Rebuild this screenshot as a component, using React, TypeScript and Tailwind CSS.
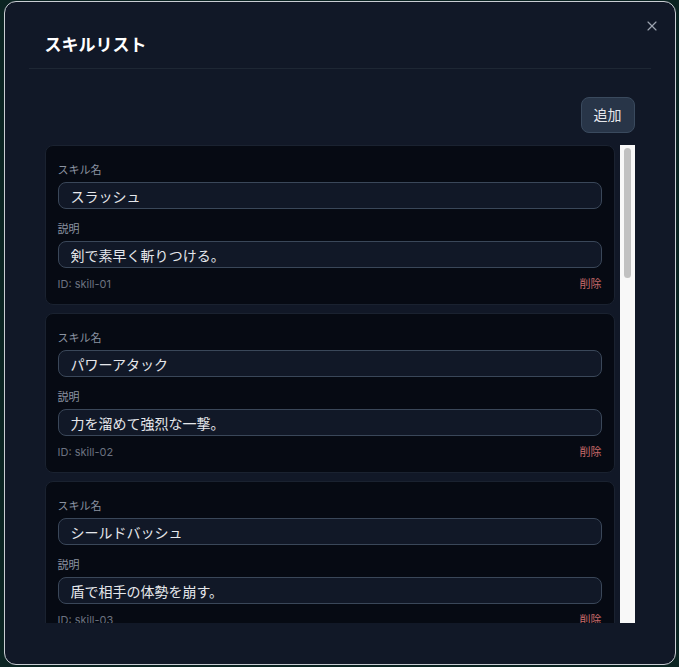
import React from "react";
import { X } from "lucide-react";

type Skill = {
  id: string;
  name: string;
  description: string;
};

const skills: Skill[] = [
  { id: "skill-01", name: "スラッシュ", description: "剣で素早く斬りつける。" },
  { id: "skill-02", name: "パワーアタック", description: "力を溜めて強烈な一撃。" },
  { id: "skill-03", name: "シールドバッシュ", description: "盾で相手の体勢を崩す。" },
  { id: "skill-04", name: "ファイアボール", description: "炎の球を放って敵を焼く。" },
  { id: "skill-05", name: "ヒール", description: "味方の傷を癒やす。" },
  { id: "skill-06", name: "アイスランス", description: "氷の槍で敵を貫く。" },
  { id: "skill-07", name: "ウォークライ", description: "雄叫びで仲間を鼓舞する。" },
  { id: "skill-08", name: "スティール", description: "敵からアイテムを盗む。" },
  { id: "skill-09", name: "サンダーボルト", description: "雷を落として敵を痺れさせる。" },
  { id: "skill-10", name: "カウンター", description: "攻撃を受け流して反撃する。" },
];

function SkillCard({ skill }: { skill: Skill }) {
  return (
    <div className="shrink-0 rounded-lg border border-[#1a2230] bg-[#060a13] px-3 pt-4 pb-3">
      <label className="mb-1 block text-[11px] leading-4 text-[#8b93a1]">スキル名</label>
      <input
        defaultValue={skill.name}
        className="block h-[27px] w-full rounded-lg border border-[#3a4759] bg-[#111827] px-3 text-sm text-[#e5e7eb] outline-none"
      />
      <label className="mt-3 mb-1 block text-[11px] leading-4 text-[#8b93a1]">説明</label>
      <input
        defaultValue={skill.description}
        className="block h-[27px] w-full rounded-lg border border-[#3a4759] bg-[#111827] px-3 text-sm text-[#e5e7eb] outline-none"
      />
      <div className="mt-2 flex items-center justify-between pt-px text-[11px] leading-[15px]">
        <span className="text-[#6b7280]">ID: {skill.id}</span>
        <button className="text-[#c96a6a]">削除</button>
      </div>
    </div>
  );
}

export default function App() {
  return (
    <div
      className="flex h-screen w-full items-start justify-center bg-[#0b2422]"
      style={{ fontFamily: '"Inter", "Noto Sans CJK JP", sans-serif' }}
    >
      <div className="relative mt-px flex h-[664px] w-[672px] flex-col rounded-xl border border-[#c9cdd3] bg-[#111827] p-6">
        <button className="absolute top-[16px] right-[15px] text-[#9ca3af]">
          <X className="h-4 w-4" strokeWidth={1.75} />
        </button>

        <div className="border-b border-[#1e2734] px-4 pt-[5px] pb-[9px]">
          <h2 className="text-[17px] leading-7 font-bold text-white">スキルリスト</h2>
        </div>

        <div className="px-4">
          <div className="mt-7 flex justify-end">
            <button className="h-9 rounded-lg border border-[#3a4a5e] bg-[#283548] px-3 text-sm text-[#e5e7eb]">
              追加
            </button>
          </div>

          <div className="mt-3 flex h-[478px] gap-[5px]">
            <div className="flex min-w-0 flex-1 flex-col gap-2 overflow-hidden">
              {skills.map((s) => (
                <SkillCard key={s.id} skill={s} />
              ))}
            </div>
            {/* scrollbar */}
            <div className="w-[15px] shrink-0 bg-[#f8f8f8] px-[4px] pt-[3px]">
              <div className="h-[130px] w-[7px] rounded-full bg-[#c1c1c1]" />
            </div>
          </div>
        </div>
      </div>
    </div>
  );
}
